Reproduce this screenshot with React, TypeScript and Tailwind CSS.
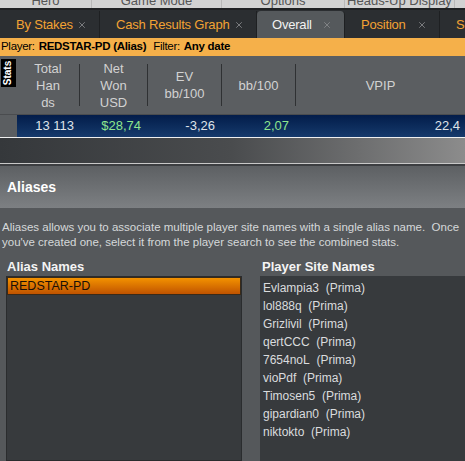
import { X } from "lucide-react";

const font = { fontFamily: '"Liberation Sans", Arial, sans-serif' };

const tabs = [
  { label: "By Stakes", w: "w-[100px]" },
  { label: "Cash Results Graph", w: "w-[157px]" },
  { label: "Overall", w: "w-[88px]", active: true },
  { label: "Position", w: "w-[95px]" },
  { label: "Settings", w: "w-[60px]" },
];

const sites = [
  "Evlampia3",
  "lol888q",
  "Grizlivil",
  "qertCCC",
  "7654noL",
  "vioPdf",
  "Timosen5",
  "gipardian0",
  "niktokto",
];

export default function App() {
  return (
    <div className="w-[465px] h-[461px] overflow-hidden flex flex-col bg-[#55585b]" style={font}>
      {/* menu strip, mostly scrolled out of view */}
      <div className="h-[8px] shrink-0 overflow-hidden bg-[#d2d2d2] flex text-[13px] text-[#555]">
        {["Hero", "Game Mode", "Options", "Heads-Up Display"].map((m, i) => (
          <div
            key={m}
            className={`-mt-[9px] flex justify-center border-r border-[#b8b8b8] ${
              ["w-[92px]", "w-[130px]", "w-[123px]", "w-[110px]"][i]
            }`}
          >
            {m}
          </div>
        ))}
      </div>

      {/* tabs */}
      <div className="h-[30px] shrink-0 bg-[#2b2e31] flex items-end border-t-2 border-[#1f2123] whitespace-nowrap">
        {tabs.map((t) => (
          <div
            key={t.label}
            className={`shrink-0 h-[27px] flex items-center justify-between pr-[12px] text-[13px] border-r border-[#1e2022] ${t.w} ${
              t.active ? "bg-[#55595c] text-[#f2f2f2] rounded-t-[4px] pl-[15px]" : "text-[#f3a333] pl-[16px]"
            }`}
          >
            <span className="tracking-[-0.2px]">{t.label}</span>
            <X size={10} strokeWidth={2} className="text-[#8a8c8e]" />
          </div>
        ))}
      </div>

      {/* player bar */}
      <div className="h-[18px] shrink-0 bg-[#f5b04a] text-[11.5px] text-black flex items-center pl-[1px] whitespace-nowrap tracking-[-0.3px]">
        <span>Player:</span>
        <span className="ml-[4px] font-bold">REDSTAR-PD (Alias)</span>
        <span className="ml-[7px]">Filter:</span>
        <span className="ml-[4px] font-bold">Any date</span>
      </div>

      {/* stats grid */}
      <div className="shrink-0 bg-[#5b5e61] flex flex-col">
        <div className="h-[59px] flex text-[13px] text-[#d2d2d2] leading-[17px] border-b border-[#4a4c4f]">
          <div className="w-[17px] shrink-0 pt-[3px] pl-[1px]">
            <div className="w-[15px] h-[28px] bg-black flex items-center justify-center">
              <span className="-rotate-90 text-[10px] font-bold text-white leading-none">Stats</span>
            </div>
          </div>
          <div className="w-[63px] flex items-center justify-center text-center border-r border-[#2f3133] my-[8px]">
            Total<br />Han<br />ds
          </div>
          <div className="w-[68px] flex items-center justify-center text-center border-r border-[#2f3133] my-[8px]">
            Net<br />Won<br />USD
          </div>
          <div className="w-[74px] flex items-center justify-center text-center border-r border-[#2f3133] my-[8px]">
            EV<br />bb/100
          </div>
          <div className="w-[74px] flex items-center justify-center text-center border-r border-[#2f3133] my-[8px]">
            bb/100
          </div>
          <div className="flex-1 flex items-center justify-center">VPIP</div>
        </div>
        <div className="h-[22px] flex text-[13px] text-[#dfe3e8]">
          <div className="w-[17px] shrink-0" />
          <div className="flex-1 flex items-center bg-gradient-to-b from-[#041d4a] to-[#163a6c]">
            <div className="w-[57px] text-right">13 113</div>
            <div className="w-[67px] text-right text-[#8ee68e]">$28,74</div>
            <div className="w-[74px] text-right">-3,26</div>
            <div className="w-[74px] text-right text-[#8ee68e]">2,07</div>
            <div className="flex-1 text-right pr-[5px]">22,4</div>
          </div>
        </div>
      </div>
      <div className="h-[1px] shrink-0 bg-[#f0f0f0]" />
      <div className="h-[25px] shrink-0 bg-gradient-to-r from-[#35383b] via-[#4a4c4e] to-[#8c8c8c]" />
      <div className="h-[1px] shrink-0 bg-[#c8c8c8]" />
      <div className="h-[2px] shrink-0 bg-[#3c3e41]" />

      {/* aliases dialog */}
      <div className="h-[42px] shrink-0 bg-gradient-to-b from-[#5d6063] to-[#7d8083] flex items-center pl-[7px] text-[14px] font-bold text-white">
        Aliases
      </div>
      <div className="px-[2px] pt-[12px] text-[11.5px] leading-[15px] text-[#d6d8da] whitespace-nowrap">
        Aliases allows you to associate multiple player site names with a single alias name.&nbsp; Once
        <br />
        you've created one, select it from the player search to see the combined stats.
      </div>
      <div className="flex-1 flex pl-[6px] pt-[10px] gap-[18px] min-h-0">
        <div className="w-[236px] flex flex-col">
          <div className="text-[13px] font-bold text-[#f4f4f4] pl-[1px] h-[16px] leading-[14px]">Alias Names</div>
          <div className="flex-1 bg-[#373a3d] border border-[#2a2c2e]">
            <div className="h-[18px] bg-gradient-to-b from-[#f39200] to-[#c05300] border border-[#3a2a18] flex items-center pl-[2px] text-[12.5px] text-[#1a1008]">
              REDSTAR-PD
            </div>
          </div>
        </div>
        <div className="flex-1 flex flex-col">
          <div className="text-[13px] font-bold text-[#f4f4f4] pl-[2px] h-[16px] leading-[14px]">Player Site Names</div>
          <div className="flex-1 bg-[#373a3d] pt-[3px] pl-[3px] text-[12px] text-[#dadcde]">
            {sites.map((s) => (
              <div key={s} className="h-[18px] flex items-center">
                {s}&nbsp; (Prima)
              </div>
            ))}
          </div>
        </div>
      </div>
    </div>
  );
}
